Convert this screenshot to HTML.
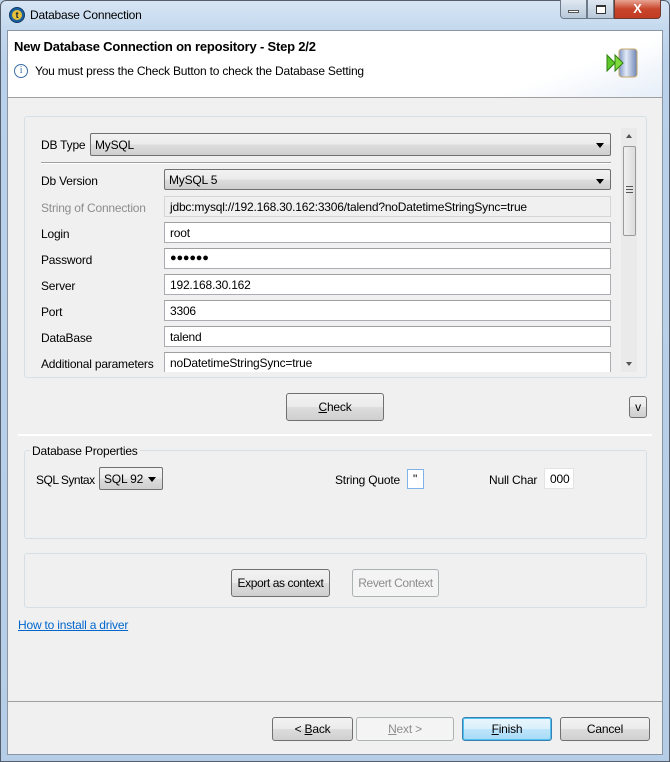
<!DOCTYPE html>
<html><head><style>
*{box-sizing:border-box;margin:0;padding:0}
body{width:670px;height:762px;position:relative;overflow:hidden;font-family:"Liberation Sans",sans-serif;font-size:12px;color:#000;background:#bcd3ea;letter-spacing:-0.2px}
.a{position:absolute}
.frame{left:0;top:0;width:670px;height:762px;border:1px solid #555e6a;border-radius:6px 6px 0 0;background:linear-gradient(180deg,#d7e5f4 0,#c3d8ee 30px,#b9d1ea 60px,#b5cde6 100%)}
.client{left:7px;top:30px;width:656px;height:725px;background:#f0f0f0;border:1px solid #8a96a4}
.lbl{position:absolute;font-size:12px;white-space:nowrap}
.tf{position:absolute;background:#fff;border:1px solid #abadb3;border-top-color:#a0a0a0;height:21px;padding:3px 5px;font-size:12px;white-space:nowrap;overflow:hidden}
.cb{position:absolute;border:1px solid #707070;border-radius:2px;background:linear-gradient(#f2f2f2,#ebebeb 50%,#dddddd 51%,#cfcfcf);padding:4px 4px;font-size:12px}
.cb:after{content:"";position:absolute;right:6px;top:9px;border:4px solid transparent;border-top:5px solid #000;border-bottom:0}
.btn{position:absolute;border:1px solid #707070;border-radius:3px;background:linear-gradient(#f2f2f2,#ebebeb 50%,#dddddd 51%,#cfcfcf);text-align:center;font-size:12px}
.dis{color:#8d8d8d;border-color:#adb2b5;background:#f4f4f4}
.grp{position:absolute;border:1px solid #d5dfe5;border-radius:3px}
</style></head><body>
<div class="a frame"></div>
<div class="a" style="left:9px;top:7px;width:16px;height:16px;border-radius:50%;background:#1b5f9d;border:1px solid #0d3a66"></div>
<div class="a" style="left:12px;top:10px;width:10px;height:10px;border-radius:50%;background:#e8c23a;color:#123;font-size:9px;line-height:10px;text-align:center;font-weight:bold">t</div>
<div class="a" style="left:30px;top:8px;font-size:12px;color:#000">Database Connection</div>
<div class="a" style="left:560px;top:0;width:27px;height:19px;border:1px solid #6d7a8a;border-top:0;border-radius:0 0 0 4px;background:linear-gradient(#dfe8f2,#b8c8da)"></div>
<div class="a" style="left:568px;top:10px;width:11px;height:3px;background:#fff;border:1px solid #555"></div>
<div class="a" style="left:587px;top:0;width:27px;height:19px;border:1px solid #6d7a8a;border-top:0;background:linear-gradient(#dfe8f2,#b8c8da)"></div>
<div class="a" style="left:596px;top:5px;width:10px;height:9px;border:1px solid #333;border-top-width:2px;background:#fff"></div>
<div class="a" style="left:614px;top:0;width:47px;height:19px;border:1px solid #6d3a30;border-top:0;border-radius:0 0 4px 0;background:linear-gradient(#e8a493,#c9462c 50%,#c23a22);color:#fff;font-weight:bold;text-align:center;font-size:13px;line-height:17px">X</div>
<div class="a client"></div>
<div class="a" style="left:8px;top:31px;width:654px;height:67px;background:linear-gradient(160deg,#fff 80%,#e6eef8);border-bottom:1px solid #a0a0a0"></div>
<div class="a" style="left:14px;top:39px;font-weight:bold;font-size:13px">New Database Connection on repository - Step 2/2</div>
<div class="a" style="left:14px;top:64px;width:14px;height:14px;border:1px solid #3a6ea5;border-radius:50%;color:#3a6ea5;font-size:10px;line-height:12px;text-align:center;font-family:'Liberation Serif',serif">i</div>
<div class="a" style="left:35px;top:64px">You must press the Check Button to check the Database Setting</div>
<svg class="a" style="left:606px;top:47px" width="36" height="32"><defs><linearGradient id="g" x1="0" x2="1"><stop offset="0" stop-color="#7f95c2"/><stop offset=".4" stop-color="#e2eaf7"/><stop offset="1" stop-color="#6e84b4"/></linearGradient></defs><rect x="13" y="2" width="18" height="28" rx="3" fill="url(#g)" stroke="#c4a86a"/><path d="M1 8l8 8-8 8z" fill="#5cc82a" stroke="#2f7f12"/><path d="M9 8l8 8-8 8z" fill="#7fdc3a" stroke="#2f7f12"/></svg>
<div class="grp" style="left:24px;top:116px;width:623px;height:262px;background:#f0f0f0"></div>
<div class="lbl" style="left:41px;top:138px">DB Type</div>
<div class="cb" style="left:90px;top:133px;width:521px;height:23px">MySQL</div>
<div class="a" style="left:41px;top:162px;width:570px;height:2px;border-top:1px solid #a0a0a0;border-bottom:1px solid #fff"></div>
<div class="lbl" style="left:41px;top:174px">Db Version</div>
<div class="cb" style="left:164px;top:169px;width:447px;height:21px;padding-top:3px">MySQL 5</div>
<div class="lbl" style="left:41px;top:201px;color:#8d8d8d">String of Connection</div>
<div class="tf" style="left:164px;top:196px;width:447px;background:#f0f0f0;border-color:#d5d5d5">jdbc:mysql://192.168.30.162:3306/talend?noDatetimeStringSync=true</div>
<div class="lbl" style="left:41px;top:227px">Login</div>
<div class="tf" style="left:164px;top:222px;width:447px">root</div>
<div class="lbl" style="left:41px;top:253px">Password</div>
<div class="tf" style="left:164px;top:248px;width:447px;font-size:11px">●●●●●●</div>
<div class="lbl" style="left:41px;top:279px">Server</div>
<div class="tf" style="left:164px;top:274px;width:447px">192.168.30.162</div>
<div class="lbl" style="left:41px;top:305px">Port</div>
<div class="tf" style="left:164px;top:300px;width:447px">3306</div>
<div class="lbl" style="left:41px;top:331px">DataBase</div>
<div class="tf" style="left:164px;top:326px;width:447px">talend</div>
<div class="lbl" style="left:41px;top:357px">Additional parameters</div>
<div class="tf" style="left:164px;top:352px;width:447px;height:20px;border-bottom:0">noDatetimeStringSync=true</div>
<div class="a" style="left:621px;top:128px;width:16px;height:244px;background:#eaeaea"></div>
<div class="a" style="left:623px;top:146px;width:13px;height:90px;border:1px solid #9a9a9a;border-radius:2px;background:linear-gradient(90deg,#f0f0f0,#dcdcdc)"></div>
<div class="a" style="left:626px;top:186px;width:7px;height:7px;border-top:1px solid #555;border-bottom:1px solid #555"></div>
<div class="a" style="left:626px;top:189px;width:7px;height:1px;background:#555"></div>
<div class="a" style="left:626px;top:134px;border:3px solid transparent;border-bottom:4px solid #555;border-top:0"></div>
<div class="a" style="left:626px;top:362px;border:3px solid transparent;border-top:4px solid #555;border-bottom:0"></div>
<div class="btn" style="left:286px;top:393px;width:98px;height:28px;line-height:26px"><u>C</u>heck</div>
<div class="btn" style="left:629px;top:396px;width:18px;height:22px;line-height:20px">v</div>
<div class="a" style="left:18px;top:434px;width:634px;height:2px;background:#fff"></div>
<div class="grp" style="left:24px;top:450px;width:623px;height:89px"></div>
<div class="lbl" style="left:30px;top:444px;background:#f0f0f0;padding:0 2px">Database Properties</div>
<div class="lbl" style="left:36px;top:473px;letter-spacing:-0.5px">SQL Syntax</div>
<div class="cb" style="left:99px;top:467px;width:64px;height:23px">SQL 92</div>
<div class="lbl" style="left:335px;top:473px">String Quote</div>
<div class="tf" style="left:407px;top:469px;width:17px;height:20px;border-color:#7eb4ea;padding:2px 5px">"</div>
<div class="lbl" style="left:489px;top:473px">Null Char</div>
<div class="tf" style="left:544px;top:468px;width:30px;height:21px;border-color:#e3e3e3">000</div>
<div class="grp" style="left:24px;top:553px;width:623px;height:55px"></div>
<div class="btn" style="left:231px;top:569px;width:99px;height:28px;line-height:26px;letter-spacing:-0.4px">Export as context</div>
<div class="btn dis" style="left:352px;top:569px;width:87px;height:28px;line-height:26px;letter-spacing:-0.4px">Revert Context</div>
<div class="lbl" style="left:18px;top:618px;color:#0066cc;text-decoration:underline">How to install a driver</div>
<div class="a" style="left:8px;top:701px;width:654px;height:1px;background:#a0a0a0"></div>
<div class="btn" style="left:272px;top:717px;width:81px;height:24px;line-height:22px">&lt; <u>B</u>ack</div>
<div class="btn dis" style="left:356px;top:717px;width:98px;height:24px;line-height:22px"><u>N</u>ext &gt;</div>
<div class="btn" style="left:462px;top:717px;width:90px;height:24px;line-height:22px;border-color:#3c7fb1;box-shadow:inset 0 0 0 1px #4fc1f0;background:linear-gradient(#eaf6fd,#d9f0fc 50%,#bee6fd 51%,#a7d9f5)"><u>F</u>inish</div>
<div class="btn" style="left:560px;top:717px;width:90px;height:24px;line-height:22px">Cancel</div>
</body></html>
